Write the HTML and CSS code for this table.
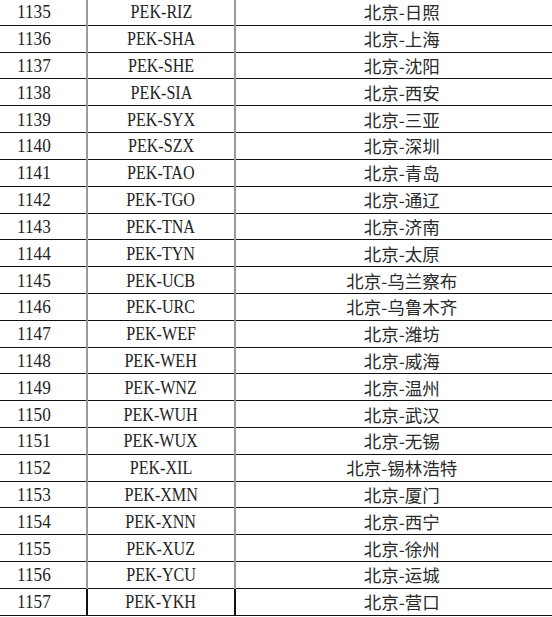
FILE: index.html
```html
<!DOCTYPE html>
<html lang="zh-CN">
<head>
<meta charset="utf-8">
<title>北京航线</title>
<link rel="stylesheet" href="styles.css">
</head>
<body>
<table class="routes">
<colgroup><col class="c-no"><col class="c-code"><col class="c-city"></colgroup>
<tbody>
<tr><td class="no"><span class="t">1135</span></td><td class="code"><span class="t">PEK-RIZ</span></td><td class="city">北京-日照</td></tr>
<tr><td class="no"><span class="t">1136</span></td><td class="code"><span class="t">PEK-SHA</span></td><td class="city">北京-上海</td></tr>
<tr><td class="no"><span class="t">1137</span></td><td class="code"><span class="t">PEK-SHE</span></td><td class="city">北京-沈阳</td></tr>
<tr><td class="no"><span class="t">1138</span></td><td class="code"><span class="t">PEK-SIA</span></td><td class="city">北京-西安</td></tr>
<tr><td class="no"><span class="t">1139</span></td><td class="code"><span class="t">PEK-SYX</span></td><td class="city">北京-三亚</td></tr>
<tr><td class="no"><span class="t">1140</span></td><td class="code"><span class="t">PEK-SZX</span></td><td class="city">北京-深圳</td></tr>
<tr><td class="no"><span class="t">1141</span></td><td class="code"><span class="t">PEK-TAO</span></td><td class="city">北京-青岛</td></tr>
<tr><td class="no"><span class="t">1142</span></td><td class="code"><span class="t">PEK-TGO</span></td><td class="city">北京-通辽</td></tr>
<tr><td class="no"><span class="t">1143</span></td><td class="code"><span class="t">PEK-TNA</span></td><td class="city">北京-济南</td></tr>
<tr><td class="no"><span class="t">1144</span></td><td class="code"><span class="t">PEK-TYN</span></td><td class="city">北京-太原</td></tr>
<tr><td class="no"><span class="t">1145</span></td><td class="code"><span class="t">PEK-UCB</span></td><td class="city">北京-乌兰察布</td></tr>
<tr><td class="no"><span class="t">1146</span></td><td class="code"><span class="t">PEK-URC</span></td><td class="city">北京-乌鲁木齐</td></tr>
<tr><td class="no"><span class="t">1147</span></td><td class="code"><span class="t">PEK-WEF</span></td><td class="city">北京-潍坊</td></tr>
<tr><td class="no"><span class="t">1148</span></td><td class="code"><span class="t">PEK-WEH</span></td><td class="city">北京-威海</td></tr>
<tr><td class="no"><span class="t">1149</span></td><td class="code"><span class="t">PEK-WNZ</span></td><td class="city">北京-温州</td></tr>
<tr><td class="no"><span class="t">1150</span></td><td class="code"><span class="t">PEK-WUH</span></td><td class="city">北京-武汉</td></tr>
<tr><td class="no"><span class="t">1151</span></td><td class="code"><span class="t">PEK-WUX</span></td><td class="city">北京-无锡</td></tr>
<tr><td class="no"><span class="t">1152</span></td><td class="code"><span class="t">PEK-XIL</span></td><td class="city">北京-锡林浩特</td></tr>
<tr><td class="no"><span class="t">1153</span></td><td class="code"><span class="t">PEK-XMN</span></td><td class="city">北京-厦门</td></tr>
<tr><td class="no"><span class="t">1154</span></td><td class="code"><span class="t">PEK-XNN</span></td><td class="city">北京-西宁</td></tr>
<tr><td class="no"><span class="t">1155</span></td><td class="code"><span class="t">PEK-XUZ</span></td><td class="city">北京-徐州</td></tr>
<tr><td class="no"><span class="t">1156</span></td><td class="code"><span class="t">PEK-YCU</span></td><td class="city">北京-运城</td></tr>
<tr class="last"><td class="no"><span class="t">1157</span></td><td class="code"><span class="t">PEK-YKH</span></td><td class="city">北京-营口</td></tr>
</tbody>
</table>
</body>
</html>
```
FILE: styles.css
```css
html, body {
  margin: 0;
  padding: 0;
  background: #ffffff;
}

.routes {
  border-collapse: collapse;
  table-layout: fixed;
  width: 552px;
  margin-top: -2px;
  color: #222222;
}

.c-no { width: 87px; }
.c-code { width: 148px; }
.c-city { width: 317px; }

.routes tr {
  height: 26.82px;
}

.routes td {
  padding: 1px 0 0 0;
  border-top: 1px solid #111111;
  border-bottom: 1px solid #111111;
  vertical-align: middle;
  white-space: nowrap;
  line-height: 20px;
}

.no, .code {
  font-family: "Liberation Serif", "Times New Roman", serif;
  font-size: 18.5px;
}

.t {
  display: inline-block;
  transform: scaleX(0.87);
}

.no {
  padding-left: 17px !important;
  text-align: left;
  border-right: 2px solid #9a9a9a;
}

.no .t {
  transform-origin: left center;
  transform: scaleX(0.93);
}

.code {
  text-align: center;
  border-right: 2px solid #9a9a9a;
}

.code .t {
  transform-origin: center center;
}

.city {
  font-family: "Noto Sans CJK SC", "Noto Sans", sans-serif;
  font-size: 17.5px;
  text-align: center;
  padding-left: 16px !important;
  color: #2a2a2a;
  border-right: 1px solid #dddddd;
}

.last .no, .last .code, .last .city {
  border-right-color: #111111;
}
```
